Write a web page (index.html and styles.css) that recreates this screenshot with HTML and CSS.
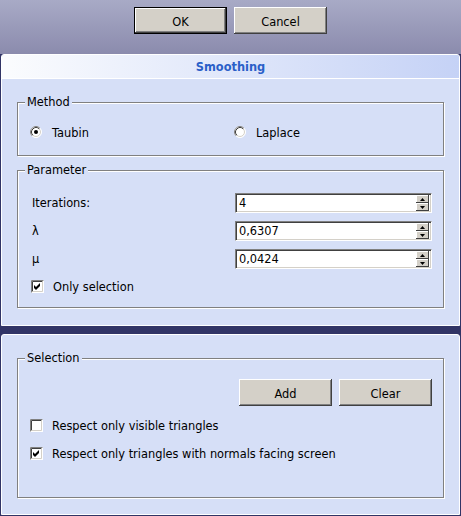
FILE: index.html
```html
<!DOCTYPE html>
<html>
<head>
<meta charset="utf-8">
<link rel="stylesheet" href="styles.css">
</head>
<body>
<div class="topbar">
  <button class="btn btn-default">OK</button>
  <button class="btn">Cancel</button>
</div>

<section class="panel">
  <header class="panel-head">Smoothing</header>
  <div class="panel-body">
    <div class="group">
      <div class="group-title">Method</div>
      <div class="frame frame-method">
        <div class="grid">
          <div class="opt">
            <svg class="ctl" width="12" height="12" viewBox="0 0 12 12"><circle cx="6" cy="6" r="5.5" fill="#fff" stroke="#fff"/><path d="M2.11 9.89A5.5 5.5 0 0 1 9.89 2.11" fill="none" stroke="#808080"/><circle cx="6" cy="6" r="4.5" fill="#fff" stroke="#d4d0c8"/><path d="M2.82 9.18A4.5 4.5 0 0 1 9.18 2.82" fill="none" stroke="#404040"/><circle cx="6" cy="6" r="2" fill="#000"/></svg>
            <span>Taubin</span>
          </div>
          <div class="opt">
            <svg class="ctl" width="12" height="12" viewBox="0 0 12 12"><circle cx="6" cy="6" r="5.5" fill="#fff" stroke="#fff"/><path d="M2.11 9.89A5.5 5.5 0 0 1 9.89 2.11" fill="none" stroke="#808080"/><circle cx="6" cy="6" r="4.5" fill="#fff" stroke="#d4d0c8"/><path d="M2.82 9.18A4.5 4.5 0 0 1 9.18 2.82" fill="none" stroke="#404040"/></svg>
            <span>Laplace</span>
          </div>
        </div>
      </div>
    </div>

    <div class="group">
      <div class="group-title">Parameter</div>
      <div class="frame frame-param">
        <div class="grid">
          <span class="lbl">Iterations:</span>
          <div class="spin"><span class="val">4</span><div class="spin-btns"><span class="sb"><svg width="5" height="3" viewBox="0 0 5 3"><path d="M2.5 0L5 3H0Z" fill="#000"/></svg></span><span class="sb"><svg width="5" height="3" viewBox="0 0 5 3"><path d="M0 0H5L2.5 3Z" fill="#000"/></svg></span></div></div>
          <span class="lbl">λ</span>
          <div class="spin"><span class="val">0,6307</span><div class="spin-btns"><span class="sb"><svg width="5" height="3" viewBox="0 0 5 3"><path d="M2.5 0L5 3H0Z" fill="#000"/></svg></span><span class="sb"><svg width="5" height="3" viewBox="0 0 5 3"><path d="M0 0H5L2.5 3Z" fill="#000"/></svg></span></div></div>
          <span class="lbl">μ</span>
          <div class="spin"><span class="val">0,0424</span><div class="spin-btns"><span class="sb"><svg width="5" height="3" viewBox="0 0 5 3"><path d="M2.5 0L5 3H0Z" fill="#000"/></svg></span><span class="sb"><svg width="5" height="3" viewBox="0 0 5 3"><path d="M0 0H5L2.5 3Z" fill="#000"/></svg></span></div></div>
          <div class="opt opt-check opt-only">
            <svg class="ctl" width="13" height="13" viewBox="0 0 13 13"><rect width="13" height="13" fill="#fff"/><path d="M0.5 12.5V0.5H12.5" fill="none" stroke="#808080"/><path d="M1.5 11.5V1.5H11.5" fill="none" stroke="#404040"/><path d="M1.5 11.5H11.5V1.5" fill="none" stroke="#d4d0c8"/><path d="M3 5L5 7L9 3V6L5 10L3 8Z" fill="#000"/></svg>
            <span>Only selection</span>
          </div>
        </div>
      </div>
    </div>
  </div>
</section>

<section class="panel panel-sel">
  <div class="panel-body">
    <div class="group">
      <div class="group-title">Selection</div>
      <div class="frame frame-sel">
        <div class="btn-row">
          <button class="btn">Add</button>
          <button class="btn">Clear</button>
        </div>
        <div class="opt opt-check">
          <svg class="ctl" width="13" height="13" viewBox="0 0 13 13"><rect width="13" height="13" fill="#fff"/><path d="M0.5 12.5V0.5H12.5" fill="none" stroke="#808080"/><path d="M1.5 11.5V1.5H11.5" fill="none" stroke="#404040"/><path d="M1.5 11.5H11.5V1.5" fill="none" stroke="#d4d0c8"/></svg>
          <span>Respect only visible triangles</span>
        </div>
        <div class="opt opt-check">
          <svg class="ctl" width="13" height="13" viewBox="0 0 13 13"><rect width="13" height="13" fill="#fff"/><path d="M0.5 12.5V0.5H12.5" fill="none" stroke="#808080"/><path d="M1.5 11.5V1.5H11.5" fill="none" stroke="#404040"/><path d="M1.5 11.5H11.5V1.5" fill="none" stroke="#d4d0c8"/><path d="M3 5L5 7L9 3V6L5 10L3 8Z" fill="#000"/></svg>
          <span>Respect only triangles with normals facing screen</span>
        </div>
      </div>
    </div>
  </div>
</section>
</body>
</html>
```

FILE: styles.css
```css
* { box-sizing: border-box; }
html, body { margin: 0; padding: 0; }
body {
  width: 461px;
  height: 516px;
  overflow: hidden;
  background: #313466;
  font-family: "DejaVu Sans", Tahoma, sans-serif;
  font-size: 11.4px;
  color: #000;
}

.topbar {
  height: 54px;
  background: linear-gradient(#a8aac6, #8b8bad);
  display: flex;
  justify-content: center;
  align-items: flex-start;
  gap: 7px;
  padding-top: 7px;
}

.btn {
  width: 93px;
  height: 27px;
  padding: 2px 0 0;
  border: 0;
  background: #d4d0c8;
  font: inherit;
  color: #000;
  box-shadow: inset -1px -1px #404040, inset 1px 1px #fff, inset -2px -2px #808080;
}
.btn-default {
  box-shadow: inset 0 0 0 1px #000, inset -2px -2px #404040, inset 2px 2px #fff, inset -3px -3px #808080;
}

.panel {
  margin: 0 1px;
  border: 1px solid #fff;
  border-radius: 3px 3px 0 0;
  background: #d6dff7;
}
.panel-sel { margin-top: 8px; }

.panel-head {
  height: 24px;
  line-height: 24px;
  border-bottom: 1px solid #fff;
  border-radius: 2px 2px 0 0;
  background: linear-gradient(to right, #fbfcfe, #c5d2f6);
  text-align: center;
  font-weight: bold;
  color: #2a5fc8;
}

.panel-body {
  display: flex;
  flex-direction: column;
  gap: 7px;
  padding: 16px 15px 17px;
}
.panel-sel .panel-body { padding-bottom: 16px; }

.group { display: flex; flex-direction: column; }
.group-title {
  position: relative;
  z-index: 1;
  align-self: flex-start;
  height: 14px;
  line-height: 15px;
  margin: 0 0 -7px 8px;
  padding: 0 2px;
  background: #d6dff7;
}

.frame {
  border: 1px solid #808080;
  box-shadow: 1px 1px 0 #fff, inset 1px 1px 0 #fff;
  padding: 0 12px 0 12px;
}
.frame-method { padding-top: 19px; padding-bottom: 13px; }
.frame-param { padding-top: 22px; padding-bottom: 11px; padding-left: 13px; }
.frame-sel {
  padding-top: 20px;
  padding-bottom: 34px;
  padding-right: 11px;
  display: flex;
  flex-direction: column;
  gap: 8px;
}

.grid {
  display: grid;
  grid-template-columns: 1fr 197px;
  align-items: center;
  row-gap: 8px;
}
.frame-param .grid { margin-right: -1px; }

.opt {
  display: flex;
  align-items: center;
  gap: 10px;
  height: 20px;
}
.opt span { padding-top: 2px; }
.opt-check { gap: 9px; }
.opt-only { grid-column: 1 / 3; margin-top: -1px; }
.ctl { flex: none; display: block; }

.lbl { height: 20px; line-height: 21px; padding-left: 1px; }

.spin {
  height: 20px;
  display: flex;
  align-items: stretch;
  background: #fff;
  border: 1px solid;
  border-color: #808080 #fff #fff #808080;
  box-shadow: inset 1px 1px #404040, inset -1px -1px #d4d0c8;
  padding: 1px;
}
.val { flex: 1; line-height: 17px; padding-left: 2px; }
.spin-btns {
  width: 13px;
  display: flex;
  flex-direction: column;
  margin-right: 1px;
}
.sb {
  flex: 1;
  display: flex;
  align-items: center;
  justify-content: center;
  background: #d4d0c8;
  box-shadow: inset -1px -1px #404040, inset 1px 1px #fff;
}
.sb svg { display: block; }

.btn-row {
  display: flex;
  justify-content: flex-end;
  gap: 7px;
  margin-bottom: 1px;
}
```
